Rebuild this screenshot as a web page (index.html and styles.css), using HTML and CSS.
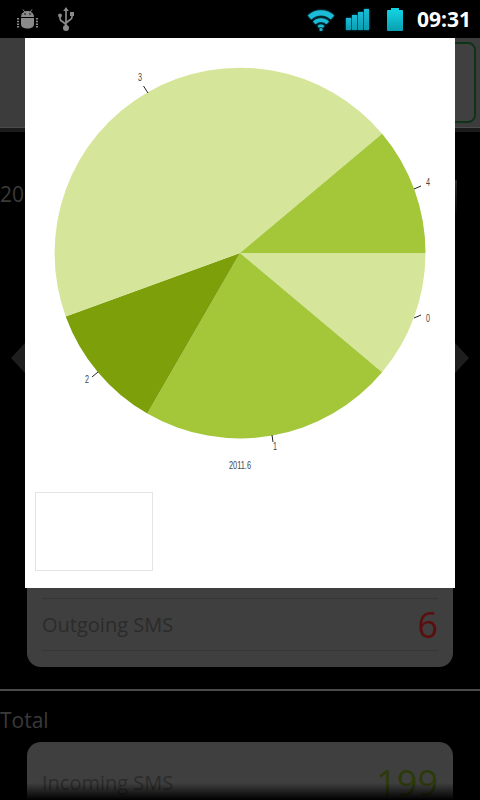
FILE: index.html
```html
<!DOCTYPE html>
<html lang="en">
<head>
    <meta charset="UTF-8">
    <meta name="viewport" content="width=device-width, initial-scale=1.0">
    <title>SMS Statistics</title>
    <link rel="stylesheet" href="styles.css">
</head>
<body>
    <div class="status-bar">
        <div class="status-group">
            <svg class="icon-android" viewBox="0 0 21 20" width="21" height="20">
                <path d="M6 0.5l2.2 3M15 0.5l-2.2 3" stroke="#8a8a8a" stroke-width="1" fill="none"/>
                <path d="M4 8c0-3.6 2.8-6 6.500-6s6.500 2.400 6.500 6z" fill="#8a8a8a"/>
                <circle cx="8" cy="5" r="0.8" fill="#000"/>
                <circle cx="13" cy="5" r="0.8" fill="#000"/>
                <path d="M4 9h13v6c0 3-2.500 4.500-6.500 4.500s-6.500-1.500-6.500-4.500z" fill="#8a8a8a"/>
                <path d="M1 9v10M20 9v10" stroke="#8a8a8a" stroke-width="2.200" stroke-dasharray="1.500 1.200" fill="none"/>
            </svg>
            <svg class="icon-usb" viewBox="0 0 16 24" width="16" height="24">
                <path d="M8 3v18M2 9v2.500c0 2 1.500 2.500 3 3.500l3 2.500M14 7v3c0 2-1.500 2.500-3 3.500l-3 2.500" stroke="#8a8a8a" stroke-width="1.700" fill="none"/>
                <path d="M8 0l2.800 4h-5.600z" fill="#8a8a8a"/>
                <circle cx="2" cy="8.500" r="1.900" fill="#8a8a8a"/>
                <rect x="12" y="5" width="4" height="4" fill="#8a8a8a"/>
                <circle cx="8" cy="21" r="3" fill="#8a8a8a"/>
            </svg>
        </div>
        <div class="status-group status-right">
            <svg class="icon-wifi" viewBox="0 0 30 24" width="30" height="24">
                <path d="M1.800 8.500a19 19 0 0 1 26.400 0l-3.500 4a14 14 0 0 0-19.400 0z" fill="#1cbcd8"/>
                <path d="M7 14.500a11.500 11.500 0 0 1 16 0l-2.500 2.800a8 8 0 0 0-11 0z" fill="#1cbcd8"/>
                <path d="M11.500 19a5 5 0 0 1 7 0l-1.500 1.800a3 3 0 0 0-4 0z" fill="#1cbcd8"/>
                <circle cx="15" cy="22.500" r="1.500" fill="#1cbcd8"/>
            </svg>
            <div class="signal">
                <span class="signal-bar bar-1"></span>
                <span class="signal-bar bar-2"></span>
                <span class="signal-bar bar-3"></span>
                <span class="signal-bar bar-4"></span>
            </div>
            <div class="battery"></div>
            <span class="clock">09:31</span>
        </div>
    </div>

    <div class="toolbar">
        <div class="toolbar-button"></div>
    </div>
    <div class="toolbar-shadow"></div>

    <div class="month-row">
        <span class="section-title">2011.6</span>
        <span class="month-edge"></span>
    </div>

    <div class="sms-card">
        <div class="sms-row sms-row-line">
            <span class="sms-label">Incoming SMS</span>
            <span class="sms-count count-in">12</span>
        </div>
        <div class="sms-row sms-row-line">
            <span class="sms-label">Outgoing SMS</span>
            <span class="sms-count count-out">6</span>
        </div>
    </div>

    <div class="divider"></div>

    <div class="total-row">
        <span class="section-title">Total</span>
    </div>

    <div class="sms-card sms-card-total">
        <div class="sms-row">
            <span class="sms-label">Incoming SMS</span>
            <span class="sms-count count-in">199</span>
        </div>
    </div>

    <div class="nav-arrow nav-prev"></div>
    <div class="nav-arrow nav-next"></div>
    <div class="bottom-fade"></div>

    <div class="chart-dialog">
        <svg class="pie-chart" viewBox="0 0 430 454" width="430" height="454">
            <path d="M215 215L400.500 215A185.500 185.500 0 0 1 357.100 334.200Z" fill="#d5e69b"/>
            <path d="M215 215L357.100 334.200A185.500 185.500 0 0 1 122.300 375.600Z" fill="#a4c639"/>
            <path d="M215 215L122.300 375.600A185.500 185.500 0 0 1 40.700 278.400Z" fill="#7c9f0a"/>
            <path d="M215 215L40.700 278.400A185.500 185.500 0 0 1 357.100 95.800Z" fill="#d5e69b"/>
            <path d="M215 215L357.100 95.800A185.500 185.500 0 0 1 400.500 215Z" fill="#a4c639"/>

            <g stroke="#222" stroke-width="1">
                <path d="M396 277L389 280"/>
                <path d="M247 397L248 404"/>
                <path d="M73 334L67 339"/>
                <path d="M118.500 48L123 55"/>
                <path d="M396 148L389 151"/>
            </g>
            <g class="pie-label">
                <text x="401" y="284" textLength="4" lengthAdjust="spacingAndGlyphs">0</text>
                <text x="248" y="412" textLength="4" lengthAdjust="spacingAndGlyphs">1</text>
                <text x="60" y="345" textLength="4" lengthAdjust="spacingAndGlyphs">2</text>
                <text x="113" y="43" textLength="4" lengthAdjust="spacingAndGlyphs">3</text>
                <text x="401" y="148" textLength="4" lengthAdjust="spacingAndGlyphs">4</text>
            </g>
            <text class="pie-title" x="204" y="431" textLength="22" lengthAdjust="spacingAndGlyphs">2011.6</text>
        </svg>
        <div class="legend-box"></div>
    </div>
</body>
</html>
```

FILE: styles.css
```css
body {
    margin: 0;
    width: 480px;
    height: 800px;
    overflow: hidden;
    position: relative;
    background-color: #000;
    font-family: "Open Sans", "Noto Sans", sans-serif;
}

.status-bar {
    height: 38px;
    display: flex;
    justify-content: space-between;
    align-items: center;
    padding: 0 9px 0 17px;
    background-color: #000;
}

.status-group {
    display: flex;
    align-items: center;
}

.icon-android {
    margin-right: 20px;
}

.icon-wifi {
    margin: 0 10px 0 0;
    filter: drop-shadow(0 0 1px #0b7f95);
}

.signal {
    display: flex;
    align-items: flex-end;
    gap: 1px;
    height: 21px;
    margin-right: 18px;
    filter: drop-shadow(0 0 1px #0b7f95);
}

.signal-bar {
    width: 5px;
    background: linear-gradient(#1cbcd8, #0a9db0);
}

.bar-1 { height: 12px; }
.bar-2 { height: 15px; }
.bar-3 { height: 18px; }
.bar-4 { height: 21px; }

.battery {
    position: relative;
    width: 16px;
    height: 21px;
    margin: 2px 14px 0 0;
    border-radius: 1px;
    background: linear-gradient(#12d2e2, #0a9fb0);
}

.battery::before {
    content: "";
    position: absolute;
    top: -2px;
    left: 4px;
    width: 8px;
    height: 2px;
    background-color: #12d2e2;
}

.clock {
    color: #fff;
    font-size: 21px;
    font-weight: 700;
    line-height: 38px;
}

.toolbar {
    height: 89px;
    display: flex;
    justify-content: flex-end;
    align-items: center;
    padding-right: 4px;
    background-color: #3c3c3c;
    border-bottom: 1px solid #4c4c4c;
}

.toolbar-button {
    width: 200px;
    height: 77px;
    border: 2px solid #0d3319;
    border-radius: 8px;
    background-color: #404040;
}

.toolbar-shadow {
    height: 4px;
    background-color: #1b1b1b;
}

.month-row {
    height: 398px;
    box-sizing: border-box;
    padding: 47px 23px 0 0;
    display: flex;
    justify-content: space-between;
    align-items: flex-start;
}

.section-title {
    color: #3a3a3a;
    font-size: 21px;
    line-height: 30px;
}

.month-edge {
    width: 2px;
    height: 38px;
    margin-top: 1px;
    background: linear-gradient(#2a2a2a, #000);
}

.sms-card {
    margin: 0 27px;
    padding: 17px 15px 16px;
    border-radius: 14px;
    background-color: #3f3f3f;
}

.sms-card-total {
    padding-top: 15px;
}

.sms-row {
    height: 51px;
    display: flex;
    justify-content: space-between;
    align-items: center;
}

.sms-row-line {
    border-bottom: 1px solid #363636;
}

.sms-label {
    color: #2b2b2b;
    font-size: 20px;
}

.sms-count {
    font-size: 36px;
    line-height: 51px;
}

.count-in {
    color: #2c3a0a;
}

.count-out {
    color: #5a0e0e;
}

.divider {
    height: 2px;
    margin-top: 22px;
    background-color: #4a4a4a;
}

.total-row {
    height: 51px;
    box-sizing: border-box;
    padding-top: 14px;
}

.nav-arrow {
    position: absolute;
    top: 343px;
    width: 14px;
    height: 30px;
    background-color: #1e1e1e;
}

.nav-prev {
    left: 11px;
    clip-path: polygon(100% 0, 0 50%, 100% 100%);
}

.nav-next {
    left: 455px;
    clip-path: polygon(0 0, 100% 50%, 0 100%);
}

.bottom-fade {
    position: absolute;
    left: 0;
    right: 0;
    bottom: 0;
    height: 17px;
    background: linear-gradient(rgba(0, 0, 0, 0), #000);
}

.chart-dialog {
    position: absolute;
    top: 38px;
    left: 25px;
    width: 430px;
    height: 550px;
    background-color: #fff;
}

.pie-chart {
    display: block;
}

.pie-label text,
.pie-title {
    fill: #444;
    font-family: "Liberation Sans", sans-serif;
    font-size: 10px;
}

.legend-box {
    width: 116px;
    height: 77px;
    margin-left: 10px;
    border: 1px solid #e4e4e4;
}
```
